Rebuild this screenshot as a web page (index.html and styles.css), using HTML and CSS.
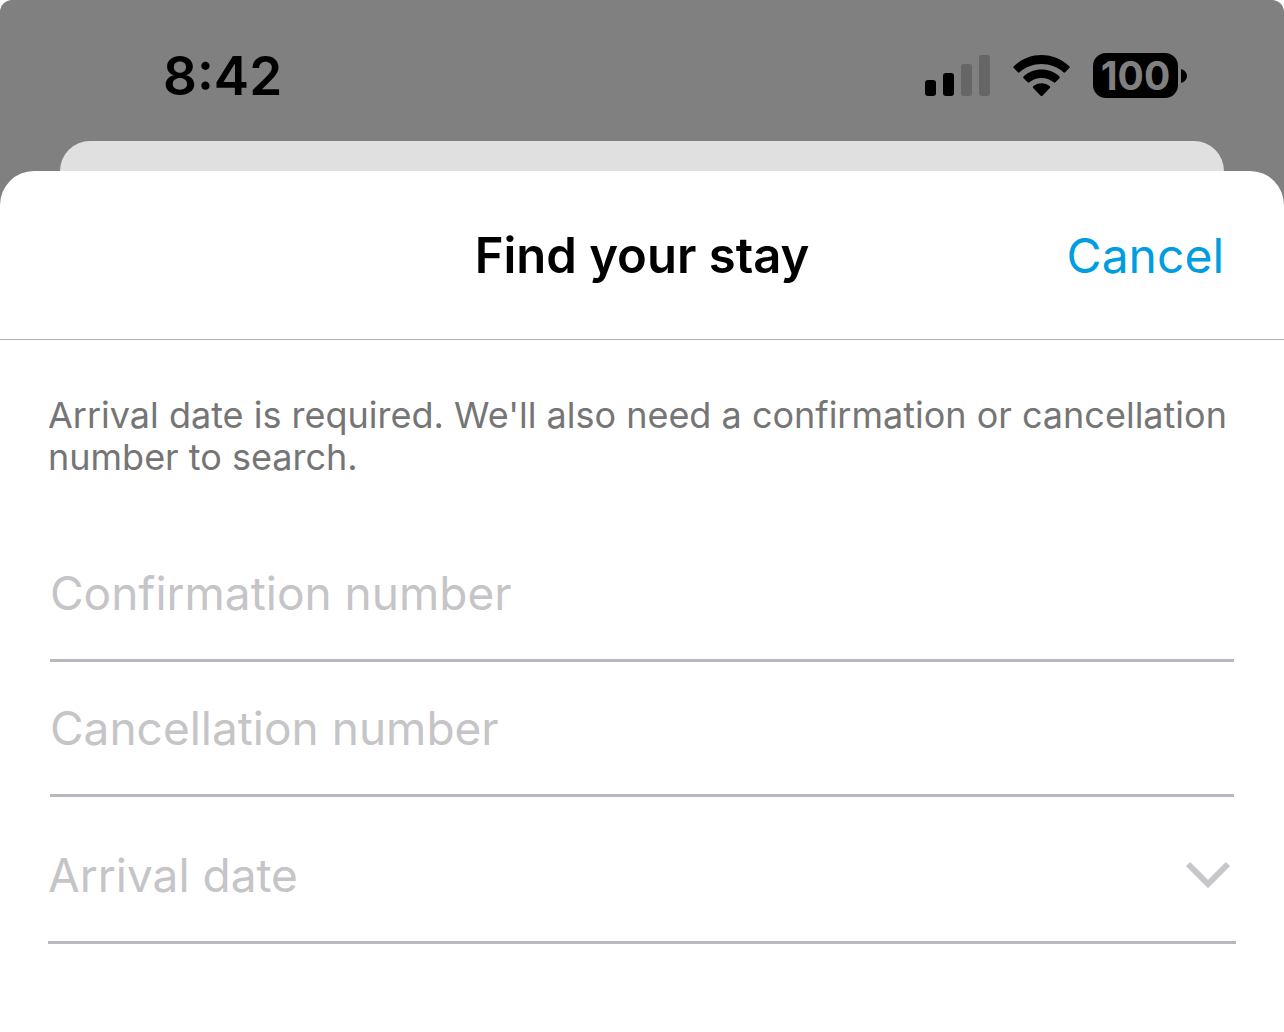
FILE: index.html
```html
<!DOCTYPE html>
<html lang="en">

<head>
    <meta charset="UTF-8">
    <meta name="viewport" content="width=device-width, initial-scale=1">
    <title>Find your stay</title>
    <link rel="stylesheet" href="styles.css">
</head>

<body>
    <div class="screen">
        <div class="status-bar">
            <span class="time">8:42</span>
            <div class="status-icons">
                <svg class="signal" width="66" height="42" viewBox="0 0 66 42" aria-hidden="true">
                    <rect x="0" y="25" width="11" height="16" rx="3"/>
                    <rect x="18" y="18" width="11" height="23" rx="3"/>
                    <rect class="off" x="36" y="9" width="11" height="32" rx="3"/>
                    <rect class="off" x="54" y="0" width="11" height="41" rx="3"/>
                </svg>
                <svg class="wifi" width="58" height="42" viewBox="0 0 59 43" aria-hidden="true">
                    <path d="M.6 11.600C8.200 4.200 18.200 0 29 0s20.800 4.200 28.400 11.600q.9.900 0 1.800l-4.200 4.200q-.9.900-1.800 0C45.400 12.300 37.500 9.200 29 9.200S12.600 12.300 6.600 17.600q-.9.900-1.800 0l-4.200-4.200q-.9-.9 0-1.800z"/>
                    <path d="M10.600 21.900C15.600 17.300 22.100 14.800 29 14.800s13.400 2.500 18.400 7.100q.9.900 0 1.800l-4.200 4.200q-.9.900-1.800 0C37.900 25 33.600 23.500 29 23.500s-8.900 1.500-12.400 4.400q-.9.900-1.800 0l-4.200-4.200q-.9-.9 0-1.800z"/>
                    <path d="M20.500 32C22.900 30.100 25.900 29 29 29s6.100 1.100 8.500 3q.9.900 0 1.800l-7.600 7.900q-.9.900-1.800 0l-7.600-7.900q-.9-.9 0-1.800z"/>
                </svg>
                <div class="battery">
                    <span class="battery-level">100</span>
                    <svg class="battery-cap" width="6" height="14" viewBox="0 0 6 14" aria-hidden="true">
                        <path d="M0 0c3.500 1 6 3.800 6 7s-2.500 6-6 7z"/>
                    </svg>
                </div>
            </div>
        </div>

        <div class="back-sheet"></div>

        <form class="sheet">
            <div class="sheet-header">
                <h1>Find your stay</h1>
                <button type="button" class="cancel">Cancel</button>
            </div>
            <div class="sheet-body">
                <p class="hint">Arrival date is required. We'll also need a confirmation or cancellation number to search.</p>
                <div class="field">
                    <input type="text" name="confirmation" placeholder="Confirmation number" aria-label="Confirmation number">
                </div>
                <div class="field">
                    <input type="text" name="cancellation" placeholder="Cancellation number" aria-label="Cancellation number">
                </div>
                <div class="field field-select">
                    <select name="arrival" aria-label="Arrival date">
                        <option value="">Arrival date</option>
                    </select>
                    <svg class="chevron" width="44" height="28" viewBox="0 0 44 28" aria-hidden="true">
                        <path d="M2 3l20 20L42 3"/>
                    </svg>
                </div>
            </div>
        </form>
    </div>
</body>

</html>
```

FILE: styles.css
```css
* {
    box-sizing: border-box;
}

body {
    margin: 0;
    background: #fff;
    color: #000;
    font-family: Inter, "Liberation Sans", sans-serif;
}

.screen {
    display: flex;
    flex-direction: column;
    min-height: 100vh;
    border-radius: 12px 12px 0 0;
    background: #808080;
}

/* status bar */
.status-bar {
    display: flex;
    justify-content: space-between;
    align-items: center;
    height: 141px;
    padding: 10px 97px 0 163px;
}

.time {
    font-size: 53px;
    font-weight: 600;
}

.status-icons {
    display: flex;
    align-items: center;
    gap: 22px;
}

.signal .off {
    fill: #666;
}

.battery {
    display: flex;
    align-items: center;
    gap: 3px;
}

.battery-level {
    width: 85px;
    border-radius: 13px;
    background: #000;
    color: #808080;
    font-size: 39px;
    font-weight: 700;
    line-height: 45px;
    text-align: center;
}

/* sheets */
.back-sheet {
    height: 72px;
    margin: 0 60px -42px;
    border-radius: 30px 30px 0 0;
    background: #e0e0e0;
}

.sheet {
    flex: 1;
    border-radius: 34px 34px 0 0;
    background: #fff;
}

.sheet-header {
    display: grid;
    grid-template-columns: 1fr auto 1fr;
    align-items: center;
    height: 169px;
    padding: 0 60px;
    border-bottom: 1px solid #b2b2b2;
}

.sheet-header h1 {
    grid-column: 2;
    margin: 0;
    font-size: 49px;
    font-weight: 600;
}

.cancel {
    justify-self: end;
    padding: 0;
    border: none;
    background: none;
    color: #009de0;
    font-family: inherit;
    font-size: 48px;
    cursor: pointer;
}

.sheet-body {
    padding: 54px 48px;
}

.hint {
    margin: 0 0 49px;
    color: #757575;
    font-size: 36px;
    line-height: 42px;
}

/* form fields */
.field {
    margin: 0 2px;
}

.field input,
.field select {
    display: block;
    width: 100%;
    height: 135px;
    padding: 0;
    border: none;
    border-bottom: 3px solid #b9b8be;
    border-radius: 0;
    outline: none;
    background: none;
    color: #000;
    font-family: inherit;
    font-size: 46px;
    appearance: none;
}

.field input::placeholder {
    color: #c5c5c7;
    opacity: 1;
}

.field-select {
    position: relative;
    margin: 12px 0 0;
}

.field select {
    color: #c5c5c7;
}

.chevron {
    position: absolute;
    top: 52px;
    right: 6px;
    fill: none;
    stroke: #c7c6cc;
    stroke-width: 6;
    pointer-events: none;
}
```
